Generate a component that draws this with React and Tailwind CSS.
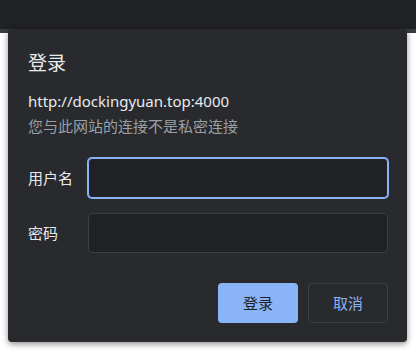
const FONT = "font-['Segoe_UI','Noto_Sans','Noto_Sans_CJK_SC',sans-serif]";

const Field = ({ label, focused }) => (
  <div className="flex items-center">
    <label className="w-[60px] text-[15px] leading-5 text-[#e8eaed]">{label}</label>
    <div
      className={
        focused
          ? "h-10 w-[300px] rounded-[4px] border border-[#8ab4f8] bg-[#202124] ring-1 ring-[#8ab4f8]"
          : "h-10 w-[300px] rounded-[4px] border border-[#3c4043] bg-[#202124]"
      }
    />
  </div>
);

export default function App() {
  return (
    <div className={`relative h-[355px] w-[416px] overflow-hidden bg-white ${FONT}`}>
      <div className="h-[29px] bg-[#202124]" />
      <div className="h-[4px] bg-[#3a3b3e]" />

      {/* login dialog */}
      <div className="absolute left-[8px] top-[29px] flex h-[313px] w-[399px] flex-col rounded-[4px] bg-[#292a2d] pl-5 pr-[19px] pt-[21px] shadow-[0_2px_6px_rgba(0,0,0,0.45)]">
        <h1 className="text-[19px] leading-[26px] text-[#e8eaed]">登录</h1>
        <p className="mt-[15px] text-[15px] leading-5 text-[#e8eaed]">http://dockingyuan.top:4000</p>
        <p className="mt-[5px] text-[15px] leading-5 text-[#9aa0a6]">您与此网站的连接不是私密连接</p>

        <div className="mt-[22px] flex flex-col gap-[15px]">
          <Field label="用户名" focused />
          <Field label="密码" />
        </div>

        <div className="mt-[30px] flex justify-end gap-[10px]">
          <button className="h-10 w-20 rounded-[4px] bg-[#8ab4f8] text-[15px] text-[#202124]">登录</button>
          <button className="h-10 w-20 rounded-[4px] border border-[#3c4043] text-[15px] text-[#8ab4f8]">取消</button>
        </div>
      </div>
    </div>
  );
}
